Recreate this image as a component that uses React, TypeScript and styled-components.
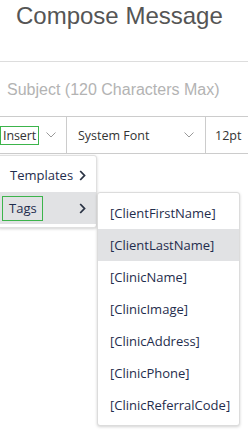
import React from "react";
import styled, { createGlobalStyle } from "styled-components";

const Global = createGlobalStyle`
  html, body { margin: 0; padding: 0; background: #fff; }
  body { width: 248px; height: 431px; overflow: hidden; }
  * { box-sizing: border-box; }
`;

const Page = styled.div`
  position: relative;
  width: 248px;
  height: 431px;
  overflow: hidden;
`;

const Title = styled.h1`
  margin: 0;
  height: 61px;
  padding: 1px 0 0 16px;
  font-family: "Liberation Sans", Arial, sans-serif;
  font-weight: 400;
  font-size: 24px;
  line-height: 30px;
  color: #555;
`;

const Subject = styled.div`
  height: 55px;
  border-top: 1px solid #ddd;
  display: flex;
  align-items: center;
  padding: 2px 0 0 7px;
  font-family: "Liberation Sans", Arial, sans-serif;
  font-size: 16px;
  color: #b3b3b3;
  white-space: nowrap;
`;

const Toolbar = styled.div`
  position: relative;
  display: flex;
  height: 38px;
  border-top: 1px solid #ccc;
  border-bottom: 1px solid #ccc;
  font-family: "Open Sans", "Noto Sans", sans-serif;
  font-size: 12.5px;
  color: #333;
`;

const Cell = styled.div<{ $w?: number }>`
  position: relative;
  display: flex;
  align-items: center;
  width: ${(p) => (p.$w ? `${p.$w}px` : "auto")};
  flex: ${(p) => (p.$w ? "none" : "1")};
  border-right: ${(p) => (p.$w ? "1px solid #ccc" : "none")};
  padding-left: ${(p) => (p.$w ? "0" : "9px")};
`;

const Focused = styled.span`
  display: inline-flex;
  align-items: center;
  height: 19px;
  padding: 0 2px 0 2px;
  border: 1px solid #3cb44b;
  letter-spacing: -0.1px;
`;

const Label = styled.span<{ $pl: number }>`
  padding-left: ${(p) => p.$pl}px;
`;

const Chevron = styled.svg<{ $left: number }>`
  position: absolute;
  left: ${(p) => p.$left}px;
  top: 15px;
  width: 10px;
  height: 6px;
`;

const Menu = styled.div`
  position: absolute;
  left: -1px;
  top: 38px;
  width: 98px;
  padding: 2px 0 3px;
  background: #fff;
  border: 1px solid #e0e0e0;
  border-radius: 0 3px 3px 0;
  box-shadow: 0 1px 3px rgba(0, 0, 0, 0.18);
  z-index: 2;
`;

const MenuItem = styled.div<{ $active?: boolean }>`
  position: relative;
  display: flex;
  align-items: center;
  justify-content: space-between;
  height: ${(p) => (p.$active ? "32px" : "34px")};
  padding: 0 10px 0 ${(p) => (p.$active ? "2px" : "10px")};
  background: ${(p) => (p.$active ? "#e1e2e4" : "transparent")};
  color: #1f2d4d;
  font-size: 13px;
`;

const TagLabel = styled.span`
  display: inline-flex;
  align-items: center;
  height: 25px;
  padding: 0 5px 0 6px;
  border: 1px solid #3cb44b;
`;

const Arrow = styled.svg`
  width: 7px;
  height: 11px;
`;

const SubMenu = styled.div`
  position: absolute;
  left: 97px;
  top: 0;
  width: 143px;
  padding: 4px 0;
  background: #fff;
  border: 1px solid #dcdcdc;
  border-radius: 3px;
  box-shadow: 0 1px 3px rgba(0, 0, 0, 0.18);
`;

const SubItem = styled.div<{ $hover?: boolean }>`
  height: 32px;
  display: flex;
  align-items: center;
  padding-left: 12px;
  background: ${(p) => (p.$hover ? "#e1e2e4" : "transparent")};
  color: #1f2d4d;
  font-size: 13px;
  white-space: nowrap;
`;

const Down = ({ left }: { left: number }) => (
  <Chevron $left={left} viewBox="0 0 10 6">
    <path d="M0.5 0.5 L5 5 L9.5 0.5" fill="none" stroke="#999" strokeWidth="1" />
  </Chevron>
);

const Right = () => (
  <Arrow viewBox="0 0 7 11">
    <path d="M1.2 1 L5.5 5.5 L1.2 10" fill="none" stroke="#2a3344" strokeWidth="1.8" />
  </Arrow>
);

const tags = [
  "[ClientFirstName]",
  "[ClientLastName]",
  "[ClinicName]",
  "[ClinicImage]",
  "[ClinicAddress]",
  "[ClinicPhone]",
  "[ClinicReferralCode]",
];

export default function App() {
  return (
    <Page>
      <Global />
      <Title>Compose Message</Title>
      <Subject>Subject (120 Characters Max)</Subject>
      <Toolbar>
        <Cell $w={67}>
          <Focused>Insert</Focused>
          <Down left={46} />
          <Menu>
            <MenuItem>
              <span>Templates</span>
              <Right />
            </MenuItem>
            <MenuItem $active>
              <TagLabel>Tags</TagLabel>
              <Right />
              <SubMenu>
                {tags.map((t, i) => (
                  <SubItem key={t} $hover={i === 1}>
                    {t}
                  </SubItem>
                ))}
              </SubMenu>
            </MenuItem>
          </Menu>
        </Cell>
        <Cell $w={139}>
          <Label $pl={11}>System Font</Label>
          <Down left={117} />
        </Cell>
        <Cell>12pt</Cell>
      </Toolbar>
    </Page>
  );
}
